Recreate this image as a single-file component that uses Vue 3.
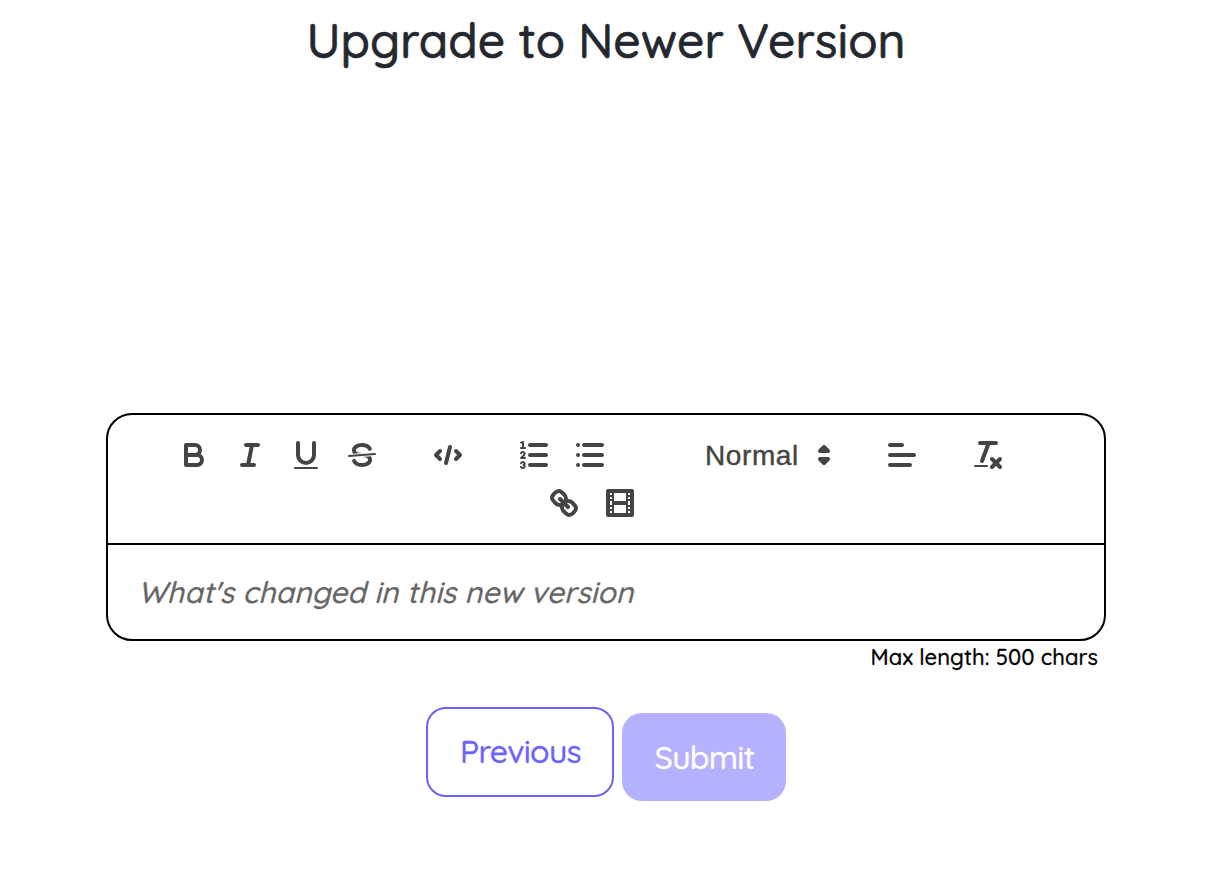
<template>
  <main class="page">
    <h1>{{ title }}</h1>
    <section class="editor">
      <div class="toolbar">
        <div class="row">
          <span class="group">
            <button aria-label="Bold">
              <svg viewBox="0 0 18 18">
                <path class="stroke" d="M5,4H9.5A2.5,2.5,0,0,1,12,6.5v0A2.5,2.5,0,0,1,9.5,9H5A0,0,0,0,1,5,9V4A0,0,0,0,1,5,4Z" />
                <path class="stroke" d="M5,9h5.5A2.5,2.5,0,0,1,13,11.5v0A2.5,2.5,0,0,1,10.5,14H5a0,0,0,0,1,0,0V9A0,0,0,0,1,5,9Z" />
              </svg>
            </button>
            <button aria-label="Italic">
              <svg viewBox="0 0 18 18">
                <line class="stroke" x1="7" x2="13" y1="4" y2="4" />
                <line class="stroke" x1="5" x2="11" y1="14" y2="14" />
                <line class="stroke" x1="8" x2="10" y1="14" y2="4" />
              </svg>
            </button>
            <button aria-label="Underline">
              <svg viewBox="0 0 18 18">
                <path class="stroke" d="M5,3V9a4.012,4.012,0,0,0,4,4H9a4.012,4.012,0,0,0,4-4V3" />
                <rect class="fill" height="1" rx="0.5" ry="0.5" width="12" x="3" y="15" />
              </svg>
            </button>
            <button aria-label="Strike">
              <svg viewBox="0 0 18 18">
                <line class="stroke thin" x1="15.5" x2="2.5" y1="8.5" y2="9.5" />
                <path class="fill" d="M9.007,8C6.542,7.791,6,7.519,6,6.5,6,5.792,7.283,5,9,5c1.571,0,2.765.679,2.969,1.309a1,1,0,0,0,1.9-.617C13.356,4.106,11.354,3,9,3,6.2,3,4,4.538,4,6.5a3.2,3.2,0,0,0,.5,1.843Z" />
                <path class="fill" d="M8.984,10C11.457,10.208,12,10.479,12,11.5c0,0.708-1.283,1.5-3,1.5-1.571,0-2.765-.679-2.969-1.309a1,1,0,1,0-1.9.617C4.644,13.894,6.646,15,9,15c2.8,0,5-1.538,5-3.5a3.2,3.2,0,0,0-.5-1.843Z" />
              </svg>
            </button>
          </span>
          <span class="group">
            <button aria-label="Code">
              <svg viewBox="0 0 18 18">
                <polyline class="stroke" points="5 7 3 9 5 11" />
                <polyline class="stroke" points="13 7 15 9 13 11" />
                <line class="stroke" x1="10" x2="8" y1="5" y2="13" />
              </svg>
            </button>
          </span>
          <span class="group">
            <button aria-label="Ordered list">
              <svg viewBox="0 0 18 18">
                <line class="stroke" x1="7" x2="15" y1="4" y2="4" />
                <line class="stroke" x1="7" x2="15" y1="9" y2="9" />
                <line class="stroke" x1="7" x2="15" y1="14" y2="14" />
                <line class="stroke thin" x1="2.5" x2="4.5" y1="5.5" y2="5.5" />
                <path class="fill" d="M3.5,6A0.5,0.5,0,0,1,3,5.5V3.085l-0.276.138A0.5,0.5,0,0,1,2.053,3c-0.124-.247-0.023-0.324.224-0.447l1-.5A0.5,0.5,0,0,1,4,2.5v3A0.5,0.5,0,0,1,3.5,6Z" />
                <path class="stroke thin" d="M4.5,10.5h-2c0-.234,1.85-1.076,1.85-2.234A0.959,0.959,0,0,0,2.5,8.156" />
                <path class="stroke thin" d="M2.5,14.846a0.959,0.959,0,0,0,1.85-.109A0.7,0.7,0,0,0,3.75,14a0.688,0.688,0,0,0,.6-0.736,0.959,0.959,0,0,0-1.85-.109" />
              </svg>
            </button>
            <button aria-label="Bullet list">
              <svg viewBox="0 0 18 18">
                <line class="stroke" x1="6" x2="15" y1="4" y2="4" />
                <line class="stroke" x1="6" x2="15" y1="9" y2="9" />
                <line class="stroke" x1="6" x2="15" y1="14" y2="14" />
                <line class="stroke" x1="3" x2="3" y1="4" y2="4" />
                <line class="stroke" x1="3" x2="3" y1="9" y2="9" />
                <line class="stroke" x1="3" x2="3" y1="14" y2="14" />
              </svg>
            </button>
          </span>
          <span class="group picker">
            <span class="picker-label">Normal</span>
            <svg viewBox="0 0 18 18">
              <polygon class="stroke filled" points="7 11 9 13 11 11 7 11" />
              <polygon class="stroke filled" points="7 7 9 5 11 7 7 7" />
            </svg>
          </span>
          <span class="group">
            <button aria-label="Align">
              <svg viewBox="0 0 18 18">
                <line class="stroke" x1="3" x2="15" y1="9" y2="9" />
                <line class="stroke" x1="3" x2="13" y1="14" y2="14" />
                <line class="stroke" x1="3" x2="9" y1="4" y2="4" />
              </svg>
            </button>
          </span>
          <span class="group">
            <button aria-label="Clear formatting">
              <svg viewBox="0 0 18 18">
                <line class="stroke" x1="5" x2="13" y1="3" y2="3" />
                <line class="stroke" x1="6" x2="9.35" y1="12" y2="3" />
                <line class="stroke" x1="11" x2="15" y1="11" y2="15" />
                <line class="stroke" x1="15" x2="11" y1="11" y2="15" />
                <rect class="fill" height="1" rx="0.5" ry="0.5" width="7" x="2" y="14" />
              </svg>
            </button>
          </span>
        </div>
        <div class="row row-media">
          <span class="group">
            <button aria-label="Link">
              <svg viewBox="0 0 18 18">
                <line class="stroke" x1="7" x2="11" y1="7" y2="11" />
                <path class="stroke" d="M8.9,4.577a3.476,3.476,0,0,1,.36,4.679A3.476,3.476,0,0,1,4.577,8.9C3.185,7.5,2.035,6.4,4.217,4.217S7.5,3.185,8.9,4.577Z" />
                <path class="stroke" d="M13.423,9.1a3.476,3.476,0,0,0-4.679-.36,3.476,3.476,0,0,0,.36,4.679c1.392,1.392,2.5,2.542,4.679.36S14.815,10.5,13.423,9.1Z" />
              </svg>
            </button>
            <button aria-label="Video">
              <svg viewBox="0 0 18 18">
                <rect class="stroke" height="12" width="12" x="3" y="3" />
                <rect class="fill" height="12" width="1" x="5" y="3" />
                <rect class="fill" height="12" width="1" x="12" y="3" />
                <rect class="fill" height="2" width="8" x="5" y="8" />
                <rect class="fill" height="1" width="3" x="3" y="5" />
                <rect class="fill" height="1" width="3" x="3" y="7" />
                <rect class="fill" height="1" width="3" x="3" y="10" />
                <rect class="fill" height="1" width="3" x="3" y="12" />
                <rect class="fill" height="1" width="3" x="12" y="5" />
                <rect class="fill" height="1" width="3" x="12" y="7" />
                <rect class="fill" height="1" width="3" x="12" y="10" />
                <rect class="fill" height="1" width="3" x="12" y="12" />
              </svg>
            </button>
          </span>
        </div>
      </div>
      <div class="content">
        <p>{{ placeholder }}</p>
      </div>
    </section>
    <p class="hint"><span>Max length: {{ maxLength }} chars</span></p>
    <div class="actions">
      <button class="btn previous"><span>Previous</span></button>
      <button class="btn submit" disabled><span>Submit</span></button>
    </div>
  </main>
</template>

<script setup>
import { ref } from 'vue';

const title = ref('Upgrade to Newer Version');
const placeholder = ref("What's changed in this new version");
const maxLength = 500;
</script>

<style>
body {
  background: #fff;
}
</style>

<style scoped>
.page {
  width: 1210px;
  height: 894px;
  box-sizing: border-box;
  padding: 10px 104px 0 106px;
  font-family: Quicksand, Lato, sans-serif;
  font-weight: 500;
  -webkit-text-stroke: 0.3px currentColor;
  color: #000;
  overflow: hidden;
}
h1,
p {
  margin: 0;
}
h1 {
  height: 403px;
  font-size: 48px;
  line-height: 60px;
  font-weight: 500;
  -webkit-text-stroke-width: 0.7px;
  text-align: center;
  white-space: nowrap;
  color: #24272f;
}
button {
  margin: 0;
  border: none;
  background: none;
  font: inherit;
}
.editor {
  height: 228px;
  box-sizing: border-box;
  border: 2px solid #000;
  border-radius: 26px;
}
.toolbar {
  height: 130px;
  box-sizing: border-box;
  padding: 16px 0 0 58px;
  border-bottom: 2px solid #000;
}
.row {
  display: flex;
  gap: 30px;
}
.row-media {
  padding-left: 370px;
}
.group {
  display: flex;
}
.group button {
  width: 56px;
  height: 48px;
  padding: 6px 10px;
}
.group svg {
  display: block;
  width: 36px;
  height: 36px;
}
.stroke {
  fill: none;
  stroke: #444;
  stroke-linecap: round;
  stroke-linejoin: round;
  stroke-width: 2;
}
.thin {
  stroke-width: 1;
}
.fill,
.filled {
  fill: #444;
}
.picker {
  width: 196px;
  box-sizing: border-box;
  padding: 6px 2px 0 57px;
  justify-content: space-between;
}
.picker-label {
  font-family: Helvetica, "Liberation Sans", Arial, sans-serif;
  font-size: 28px;
  line-height: 38px;
  letter-spacing: 0.6px;
  -webkit-text-stroke: 0.4px #444;
  color: #444;
}
.content {
  padding: 28px 30px;
}
.content p {
  font-size: 30px;
  line-height: 38px;
  font-style: italic;
  letter-spacing: 0.1px;
  white-space: nowrap;
  -webkit-text-stroke-color: #666;
  color: #666;
}
.hint {
  height: 66px;
  padding-right: 8px;
  font-size: 22px;
  line-height: 33px;
  letter-spacing: 0.08px;
  text-align: right;
}
.actions {
  display: flex;
  gap: 8px;
  padding-left: 320px;
}
.btn {
  display: flex;
  align-items: center;
  justify-content: center;
  box-sizing: border-box;
  border-radius: 20px;
  padding: 0 0 0 1px;
  font-size: 32px;
  letter-spacing: -0.75px;
}
.previous {
  width: 188px;
  height: 90px;
  padding-bottom: 2px;
  border: 2px solid #6c63ff;
  color: #6c63ff;
  -webkit-text-stroke-color: #6c63ff;
}
.submit {
  width: 164px;
  height: 88px;
  margin-top: 6px;
  background: #b6b1ff;
  color: #fff;
  -webkit-text-stroke-color: #fff;
}
</style>
